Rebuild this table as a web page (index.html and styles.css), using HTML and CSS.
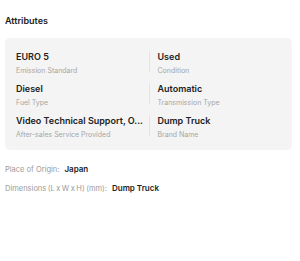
FILE: index.html
```html
<!DOCTYPE html>
<html>
<head>
<meta charset="utf-8">
<link rel="stylesheet" href="styles.css">
</head>
<body>
<div class="page">
  <h2 class="title">Attributes</h2>
  <div class="card">
    <div class="cell"><div class="val">EURO 5</div><div class="lbl">Emission Standard</div></div>
    <div class="cell right"><div class="val">Used</div><div class="lbl">Condition</div></div>
    <div class="cell"><div class="val">Diesel</div><div class="lbl">Fuel Type</div></div>
    <div class="cell right"><div class="val">Automatic</div><div class="lbl">Transmission Type</div></div>
    <div class="cell"><div class="val">Video Technical Support, O...</div><div class="lbl">After-sales Service Provided</div></div>
    <div class="cell right"><div class="val">Dump Truck</div><div class="lbl">Brand Name</div></div>
  </div>
  <div class="info">
    <div class="line"><span class="ilbl">Place of Origin:</span><span class="ival">Japan</span></div>
    <div class="line"><span class="ilbl dims">Dimensions (L x W x H) (mm):</span><span class="ival">Dump Truck</span></div>
  </div>
</div>
</body>
</html>
```
FILE: styles.css
```css
* { box-sizing: border-box; }
html, body { margin: 0; padding: 0; background: #fff; }
body { font-family: Inter, "Noto Sans", sans-serif; color: #222; }
.page { padding: 15px 8px 0 5px; }
.title { margin: 0 0 11px; font-size: 9px; line-height: 12px; font-weight: 600; color: #222; }
.card {
  background: #f4f4f4;
  border-radius: 5px;
  padding: 13px 11px 14px;
  display: grid;
  grid-template-columns: 1fr 1fr;
  row-gap: 11px;
}
.cell { height: 21px; min-width: 0; padding-right: 6px; }
.cell.right { border-left: 1px solid #e3e3e3; padding-left: 8px; }
.val {
  font-size: 9px; line-height: 12px; font-weight: 600; color: #222;
  white-space: nowrap;
}
.lbl { margin-top: 3px; font-size: 7px; line-height: 9px; color: #a6a6a6; white-space: nowrap; }
.info { margin-top: 10px; }
.line { font-size: 7.5px; line-height: 18px; display: flex; gap: 5px; align-items: baseline; }
.ilbl { color: #9b9b9b; }
.dims { word-spacing: -0.6px; }
.ival { color: #222; font-weight: 600; font-size: 8px; }
```
